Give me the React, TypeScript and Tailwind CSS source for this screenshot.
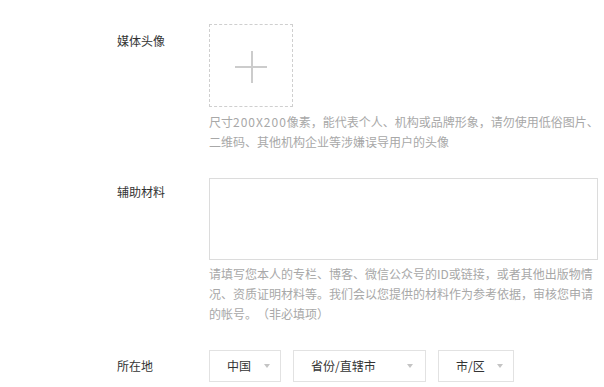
const Arrow = () => (
  <svg width="6" height="4" viewBox="0 0 6 4" className="shrink-0">
    <path d="M0 0 L6 0 L3 4 Z" fill="#c4c4c4" />
  </svg>
);

const SelectBox = ({ text, width, arrowGap }: { text: string; width: string; arrowGap: string }) => (
  <div className={`${width} h-[32px] border border-[#e2e2e2] flex items-center pl-[17px] ${arrowGap}`}>
    <span className="text-[12px] text-[#333]">{text}</span>
    <span className="flex-1" />
    <Arrow />
  </div>
);

export default function App() {
  return (
    <div
      className="w-[604px] h-[387px] bg-white overflow-hidden text-[12px] leading-[20px] text-[#333] [text-spacing-trim:space-all]"
      style={{ fontFamily: '"Noto Sans CJK SC", "Noto Sans", sans-serif' }}
    >
      <div className="pl-[117px] pt-[24px]">
        {/* 媒体头像 */}
        <div className="flex">
          <div className="w-[92px] shrink-0 mt-[7px]">媒体头像</div>
          <div>
            <div className="w-[84px] h-[83px] border border-dashed border-[#cfcfcf] relative">
              <div className="absolute left-[25px] top-[41px] w-[32px] h-[2px] bg-[#cccccc]" />
              <div className="absolute left-[41px] top-[26px] w-[2px] h-[32px] bg-[#cccccc]" />
            </div>
            <div className="mt-[5px] text-[#a8a8a8] whitespace-nowrap">
              <div>
                尺寸<span className="tracking-[1px]">200X200</span>像素，能代表个人、机构或品牌形象，请勿使用低俗图片、
              </div>
              <div>二维码、其他机构企业等涉嫌误导用户的头像</div>
            </div>
          </div>
        </div>

        {/* 辅助材料 */}
        <div className="flex mt-[26px]">
          <div className="w-[92px] shrink-0 mt-[4px]">辅助材料</div>
          <div>
            <div className="w-[389px] h-[82px] border border-[#dcdcdc]" />
            <div className="mt-[4px] text-[#a8a8a8] whitespace-nowrap">
              <div>请填写您本人的专栏、博客、微信公众号的ID或链接，或者其他出版物情</div>
              <div>况、资质证明材料等。我们会以您提供的材料作为参考依据，审核您申请</div>
              <div>的帐号。（非必填项）</div>
            </div>
          </div>
        </div>

        {/* 所在地 */}
        <div className="flex items-center mt-[26px]">
          <div className="w-[92px] shrink-0">所在地</div>
          <div className="flex gap-[12px]">
            <SelectBox text="中国" width="w-[72px]" arrowGap="pr-[10px]" />
            <SelectBox text="省份/直辖市" width="w-[133px]" arrowGap="pr-[12px]" />
            <SelectBox text="市/区" width="w-[76px]" arrowGap="pr-[10px]" />
          </div>
        </div>
      </div>
    </div>
  );
}
